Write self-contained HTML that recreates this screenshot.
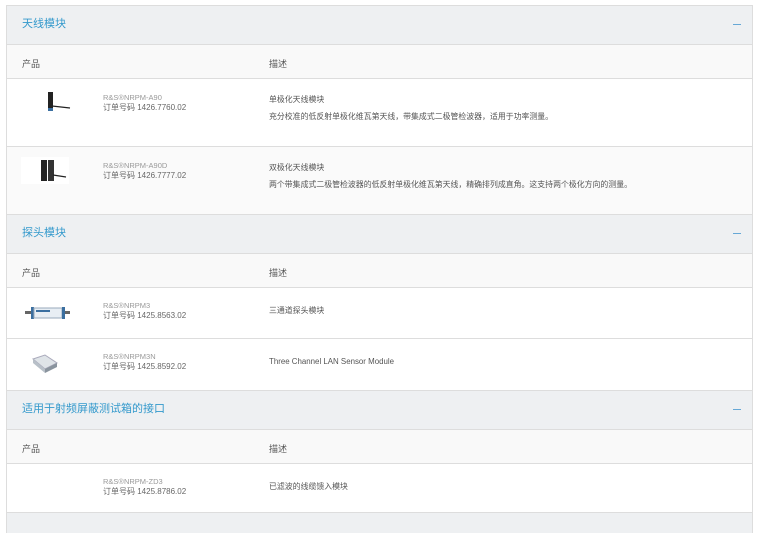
<!DOCTYPE html>
<html><head><meta charset="utf-8"><style>
*{margin:0;padding:0;box-sizing:border-box}
body{width:760px;height:521px;background:#fff;font-family:"Liberation Sans","Noto Sans CJK SC",sans-serif;color:#333;position:relative;overflow:hidden}
.wrap{position:absolute;left:6px;top:5px;width:747px;border-left:1px solid #ddd;border-right:1px solid #ddd;border-top:1px solid #ddd}
.h{height:39px;background:#eef0f2;border-bottom:1px solid #ddd;position:relative;color:#3399cc;font-size:11px;line-height:37px;padding-left:15px}
.h:after{content:"";position:absolute;right:11px;top:18px;width:8px;height:1px;background:#66a8d6}
.c{height:34px;background:#f9f9f9;border-bottom:1px solid #ddd;position:relative;font-size:9px;line-height:38px;color:#555}
.c span{position:absolute;top:0}
.r{border-bottom:1px solid #ddd;position:relative;font-size:7.5px;color:#999}
.r.g{background:#fafafa}
.p{position:absolute;left:96px;line-height:10px}
.p b{font-weight:normal;color:#666;font-size:8px}
.d{position:absolute;left:262px;color:#555;font-size:7.9px;line-height:10px}
.img{position:absolute}
</style></head><body>
<div class="wrap">
<div class="h">天线模块</div>
<div class="c"><span style="left:15px">产品</span><span style="left:262px">描述</span></div>
<div class="r" style="height:68px">
 <svg class="img" style="left:30px;top:10px" width="40" height="30"><rect x="11" y="3" width="5" height="18" fill="#222"/><rect x="11" y="19" width="5" height="3" fill="#3b6fa0"/><line x1="15" y1="17" x2="33" y2="19" stroke="#222" stroke-width="1.2"/></svg>
 <div class="p" style="top:14px">R&amp;S®NRPM-A90<br><b>订单号码 1426.7760.02</b></div>
 <div class="d" style="top:16px">单极化天线模块<br><span style="display:block;margin-top:7px">充分校准的低反射单极化维瓦第天线，带集成式二极管检波器，适用于功率测量。</span></div>
</div>
<div class="r g" style="height:68px">
 <svg class="img" style="left:14px;top:10px" width="48" height="27"><rect width="48" height="27" fill="#fff"/><rect x="20" y="3" width="6" height="21" fill="#222"/><rect x="27" y="3" width="6" height="21" fill="#333"/><line x1="32" y1="18" x2="45" y2="20" stroke="#222" stroke-width="1.2"/></svg>
 <div class="p" style="top:14px">R&amp;S®NRPM-A90D<br><b>订单号码 1426.7777.02</b></div>
 <div class="d" style="top:16px">双极化天线模块<br><span style="display:block;margin-top:7px">两个带集成式二极管检波器的低反射单极化维瓦第天线，精确排列成直角。这支持两个极化方向的测量。</span></div>
</div>
<div class="h">探头模块</div>
<div class="c"><span style="left:15px">产品</span><span style="left:262px">描述</span></div>
<div class="r" style="height:51px">
 <svg class="img" style="left:18px;top:17px" width="46" height="16"><rect x="0" y="6" width="6" height="3" fill="#666"/><rect x="6" y="2" width="3" height="12" fill="#3b6fa0"/><rect x="9" y="3" width="28" height="10" fill="#e8eef4" stroke="#9ab"/><rect x="11" y="5" width="14" height="2" fill="#3b6fa0"/><rect x="37" y="2" width="3" height="12" fill="#3b6fa0"/><rect x="40" y="6" width="5" height="3" fill="#666"/></svg>
 <div class="p" style="top:13px">R&amp;S®NRPM3<br><b>订单号码 1425.8563.02</b></div>
 <div class="d" style="top:18px">三通道探头模块</div>
</div>
<div class="r" style="height:52px">
 <svg class="img" style="left:14px;top:12px" width="46" height="27"><rect width="46" height="27" fill="#fff"/><polygon points="12,8 24,4 36,12 24,18" fill="#dfe4e8" stroke="#aab"/><polygon points="12,8 24,18 24,22 12,12" fill="#b8c0c8"/><polygon points="24,18 36,12 36,16 24,22" fill="#8a949e"/></svg>
 <div class="p" style="top:13px">R&amp;S®NRPM3N<br><b>订单号码 1425.8592.02</b></div>
 <div class="d" style="top:18px">Three Channel LAN Sensor Module</div>
</div>
<div class="h">适用于射频屏蔽测试箱的接口</div>
<div class="c"><span style="left:15px">产品</span><span style="left:262px">描述</span></div>
<div class="r" style="height:49px">
 <div class="p" style="top:13px">R&amp;S®NRPM-ZD3<br><b>订单号码 1425.8786.02</b></div>
 <div class="d" style="top:18px">已滤波的线缆馈入模块</div>
</div>
<div style="height:20px;background:#eef0f2"></div>
</div>
</body></html>
